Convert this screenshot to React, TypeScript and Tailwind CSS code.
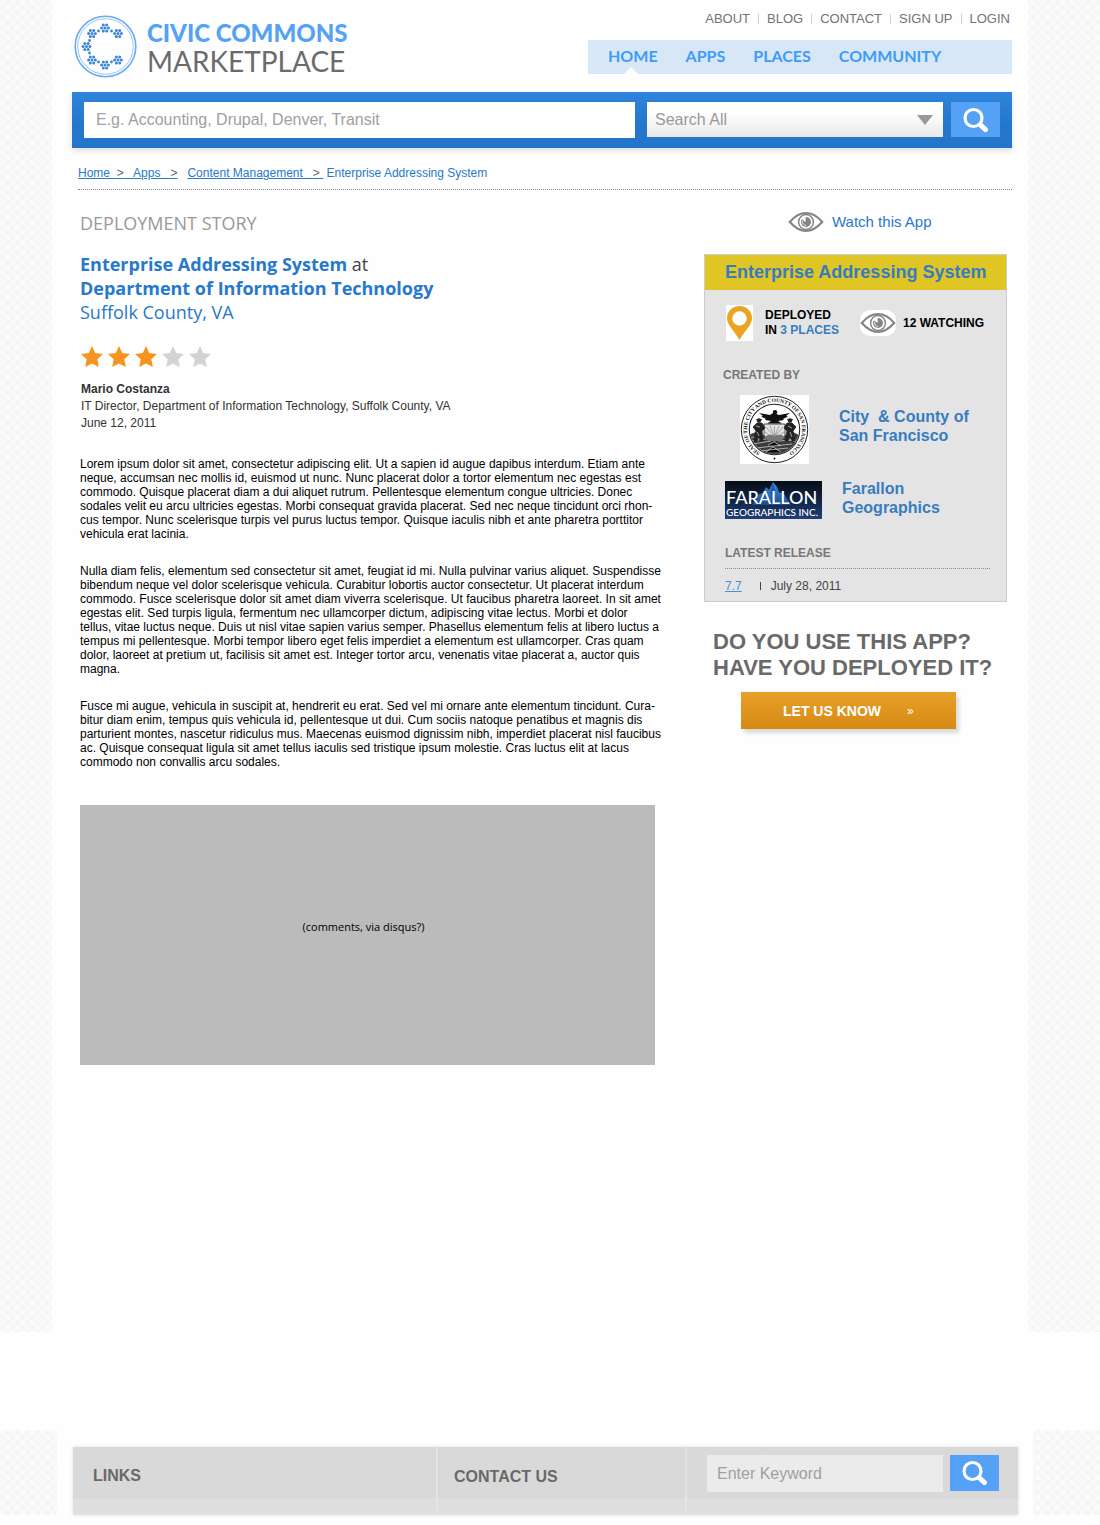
import React from "react";

const sans = "font-['Liberation_Sans',Arial,sans-serif]";
const humanist = "font-['Open_Sans',sans-serif]";
const checker =
  "bg-[repeating-conic-gradient(#f6f6f6_0%_25%,#fbfbfb_0%_50%)] bg-[length:10px_10px]";

const clusters: [number, number][] = [
  [31, 13], [18, 18.5], [44, 18.5], [12.5, 31.5], [18, 45], [44, 45], [31, 50],
];
const links: [number, number][] = [
  [24.5, 16], [37.5, 16], [15.5, 25.5], [15.5, 38], [24.5, 47], [37.5, 47],
];
const petals = [0, 60, 120, 180, 240, 300];

function LogoMark() {
  return (
    <svg viewBox="0 0 63 63" className="size-[63px] shrink-0" aria-hidden="true">
      <circle cx="31.5" cy="31.5" r="30.3" fill="none" stroke="#6aacf3" strokeWidth="1.6" />
      <circle cx="31.5" cy="31.5" r="27.8" fill="none" stroke="#8abef6" strokeWidth="0.9" />
      <g fill="#3b86d6">
        {clusters.map(([x, y], i) => (
          <g key={i}>
            <circle cx={x} cy={y} r="1.5" />
            {petals.map((a) => (
              <circle
                key={a}
                cx={x + 3.4 * Math.cos((a * Math.PI) / 180)}
                cy={y + 3.4 * Math.sin((a * Math.PI) / 180)}
                r="1.5"
              />
            ))}
          </g>
        ))}
        {links.map(([x, y], i) => (
          <circle key={i} cx={x} cy={y} r="1.4" />
        ))}
      </g>
    </svg>
  );
}

function SearchIcon() {
  return (
    <svg viewBox="0 0 26 26" className="size-[26px]" aria-hidden="true" fill="none" stroke="#fff">
      <circle cx="10.5" cy="11" r="8.5" strokeWidth="3.2" />
      <path d="M17.5 18 L22.5 22.6" strokeWidth="5" strokeLinecap="round" />
    </svg>
  );
}

function Eye() {
  return (
    <svg viewBox="0 0 36 22" className="h-[22px] w-9" aria-hidden="true">
      <path d="M1.8 11 C8 3.5 13 2 18 2 C23 2 28 3.5 34.2 11 C28 17.8 23 20 18 20 C13 20 8 17.8 1.8 11Z" fill="#fff" stroke="#858585" strokeWidth="2.2" />
      <circle cx="18" cy="11" r="7.4" fill="none" stroke="#858585" strokeWidth="1.5" />
      <circle cx="18" cy="11" r="5" fill="#858585" />
      <path d="M17.6 11 L12.6 7.6 A6 6 0 0 1 17.6 5Z" fill="#fff" />
      <path d="M14.6 10 A4 4 0 0 0 18 14.4" fill="none" stroke="#fff" strokeWidth="0.8" />
    </svg>
  );
}

function Pin() {
  return (
    <svg viewBox="0 0 27 36" className="h-9 w-[27px] bg-white" aria-hidden="true">
      <path fillRule="evenodd" fill="#eba421" d="M13.5 1 C6.5 1 1 6.4 1 13.2 C1 20 8.5 26 13.5 35 C18.5 26 26 20 26 13.2 C26 6.4 20.5 1 13.5 1Z M13.5 6.3 A7.2 7.2 0 1 1 13.5 20.7 A7.2 7.2 0 1 1 13.5 6.3Z" />
    </svg>
  );
}

function Star({ on }: { on: boolean }) {
  return (
    <svg viewBox="0 0 22 21" className="h-[21px] w-[22px]" aria-hidden="true">
      <path
        d="M11 0 L14.2 7 L22 8 L16.3 13.2 L17.8 21 L11 17.4 L4.2 21 L5.7 13.2 L0 8 L7.8 7Z"
        fill={on ? "#f7931e" : "#d1d3d4"}
      />
    </svg>
  );
}

function CitySeal() {
  return (
    <svg viewBox="0 0 69 69" className="size-[69px] bg-white" role="img" aria-label="Seal of the City and County of San Francisco">
      <defs>
        <path id="seal-ring" d="M34.5 62 A27.5 27.5 0 1 1 34.6 62" />
        <clipPath id="seal-disc"><circle cx="34.5" cy="34.5" r="24.5" /></clipPath>
      </defs>
      <circle cx="34.5" cy="34.5" r="33.2" fill="none" stroke="#222" strokeWidth="1" />
      <circle cx="34.5" cy="34.5" r="25.2" fill="none" stroke="#222" strokeWidth="1.1" />
      <text className="font-['Liberation_Serif',serif] font-bold" fill="#111" fontSize="5.4">
        <textPath href="#seal-ring" startOffset="50%" textAnchor="middle">SEAL OF THE CITY AND COUNTY OF SAN FRANCISCO</textPath>
      </text>
      <circle cx="34.5" cy="63.5" r="0.9" fill="#111" />
      <g clipPath="url(#seal-disc)">
        <path d="M8 40 L16 37 L28 42 L42 42 L53 37 L61 41 V62 H8Z" fill="#3a3a3a" />
        <path d="M11 46 L26 44 M13 49 L31 46 M38 46 L57 45 M16 53 L52 49 M20 56 L48 53 M12 42 L22 45 M47 43 L58 48 M28 50 L34 47 L41 51 M26 57 L33 52 L41 57" stroke="#cfcfcf" strokeWidth="0.8" />
        <path d="M24 29 H45 V41 L40 45 L34.5 47 L29 45 L24 41Z" fill="#e2e2e2" stroke="#222" strokeWidth="0.8" />
        <path d="M34.5 42 L26 32 M34.5 42 L30 31 M34.5 42 V31 M34.5 42 L39 31 M34.5 42 L43 32 M25 37 L31 41 M44 37 L38 41" stroke="#888" strokeWidth="0.7" />
        <path d="M24 42 Q30 38 34.5 41 Q40 38 45 42 L41 46 H28Z" fill="#777" />
        <path d="M19 18 L30 20 L33 18 L33 15.5 L36 15 L37.5 17 L36.5 19 L39 20 L50 18 L46 21 L48 21.5 L43 24 L44 25 L38 26 L42 28.5 H27 L31 26 L25 25 L26 24 L21 21.5 L23 21Z" fill="#111" />
        <circle cx="19" cy="25.5" r="2.2" fill="#222" />
        <path d="M16 24.5 H22 M17 28 L22 28 L25 33 L22 36 L23 46 H20 L19 38 L17 46 H14 L16 36 L13 32Z" fill="#222" stroke="#222" strokeWidth="0.8" />
        <circle cx="50" cy="25.5" r="2.2" fill="#222" />
        <path d="M47 24.5 H53 M47 28 L52 28 L56 32 L53 36 L55 46 H52 L50 38 L48 46 H45 L47 36 L44 33Z" fill="#222" stroke="#222" strokeWidth="0.8" />
        <path d="M16 31 L20 32 M17 37 L19 41 M48 31 L52 33 M50 37 L52 42" stroke="#ddd" strokeWidth="0.7" />
      </g>
    </svg>
  );
}

function FarallonLogo() {
  return (
    <svg viewBox="0 0 97 38" className="h-[38px] w-[97px]" role="img" aria-label="Farallon Geographics Inc.">
      <defs>
        <linearGradient id="night" x1="0" y1="0" x2="0" y2="1">
          <stop offset="0" stopColor="#060d18" />
          <stop offset="0.5" stopColor="#102443" />
          <stop offset="1" stopColor="#203f78" />
        </linearGradient>
        <linearGradient id="peak" x1="0" y1="0" x2="0" y2="1">
          <stop offset="0" stopColor="#3a94dc" />
          <stop offset="1" stopColor="#1c4b8c" />
        </linearGradient>
      </defs>
      <rect width="97" height="38" fill="url(#night)" />
      <path d="M27 24 L34 13 L38 12 L41 6 L44 9 L48 1 L52 6 L54 11 L59 13 L66 24Z" fill="url(#peak)" />
      <path d="M48 1 L45 12 L49 18 L50 10Z M38 12 L36 21 L41 16Z" fill="#1d5da8" />
      <g className="font-[Lato,sans-serif]" fill="#fff">
        <text x="1" y="23" fontSize="18" fontWeight="500">FARALLON</text>
        <text x="1" y="35" fontSize="10" fontWeight="500">GEOGRAPHICS INC.</text>
      </g>
    </svg>
  );
}

function Header() {
  const top = ["ABOUT", "BLOG", "CONTACT", "SIGN UP", "LOGIN"];
  return (
    <header className="flex justify-between">
      <a href="#home" className="mt-[15px] ml-0.5 flex gap-2.5 font-[Lato,sans-serif]">
        <LogoMark />
        <span className="flex flex-col pt-1">
          <span className="text-2xl leading-7 font-black text-[#55a2f5]">CIVIC COMMONS</span>
          <span className="text-[28px] leading-7 text-[#6b6b6b]">MARKETPLACE</span>
        </span>
      </a>
      <div className="w-[424px]">
        <nav aria-label="Account" className="mt-[11px] flex h-4 items-center justify-end pr-0.5 text-[13px] text-[#737373]">
          {top.map((t, i) => (
            <React.Fragment key={t}>
              {i > 0 && <span className="mx-2 h-2.5 w-px bg-[#cfcfcf]" />}
              <a href="#account">{t}</a>
            </React.Fragment>
          ))}
        </nav>
        <nav aria-label="Main" className="mt-[13px] flex h-[34px] items-center gap-7 bg-[#d8e7f5] pb-0.5 pl-5 font-[Lato,sans-serif] text-base font-bold text-[#3d9bfb]">
          <a href="#home" aria-current="page" className="relative flex h-full items-center">
            HOME
            <span className="absolute -bottom-0.5 left-4 border-x-[7px] border-b-[7px] border-x-transparent border-b-white" />
          </a>
          <a href="#apps">APPS</a>
          <a href="#places">PLACES</a>
          <a href="#community">COMMUNITY</a>
        </nav>
      </div>
    </header>
  );
}

function SearchBar() {
  return (
    <form className="mt-3.5 flex h-14 items-start bg-linear-to-b from-[#2f85dc] to-[#2376cb] to-60% px-3 pt-2.5 shadow-[0_3px_6px_rgba(0,0,0,0.12)]">
      <input
        aria-label="Search"
        placeholder="E.g. Accounting, Drupal, Denver, Transit"
        className="h-9 min-w-0 flex-1 bg-white px-3 text-base placeholder:text-[#a0a0a0]"
      />
      <div className="relative ml-3 w-[296px]">
        <select aria-label="Search in" className="h-[35px] w-full appearance-none bg-linear-to-b from-white from-30% to-[#e9e9e9] px-2 text-base text-[#999]">
          <option>Search All</option>
        </select>
        <span className="pointer-events-none absolute top-[13px] right-2.5 border-x-8 border-t-[10px] border-x-transparent border-t-[#999]" />
      </div>
      <button type="button" aria-label="Search" className="ml-2 flex h-[35px] w-[49px] items-center justify-center bg-[#54a1f6]">
        <SearchIcon />
      </button>
    </form>
  );
}

function Breadcrumb() {
  return (
    <nav aria-label="Breadcrumb" className="mt-[17px] ml-1.5 border-b border-dotted border-[#888] pb-[7px] text-xs leading-[17px] whitespace-pre text-[#2779cb]">
      <a href="#home" className="underline">Home  <span className="text-[#666]">&gt;</span>   </a>
      <a href="#apps" className="underline">Apps   <span className="text-[#666]">&gt;</span></a>
      {"   "}
      <a href="#content" className="underline">Content Management   <span className="text-[#666]">&gt;</span> </a>
      <span> Enterprise Addressing System</span>
    </nav>
  );
}

function Story() {
  return (
    <article className="min-w-0 flex-1">
      <h2 className={`${humanist} text-lg leading-6 text-[#999]`}>DEPLOYMENT STORY</h2>
      <h1 className={`${humanist} mt-[17px] text-lg leading-6 text-[#2779cb]`}>
        <a href="#app" className="font-bold">Enterprise Addressing System</a>
        <span className="text-[#444]"> at</span>
        <br />
        <a href="#dept" className="font-bold">Department of Information Technology</a>
        <br />
        Suffolk County, VA
      </h1>
      <div role="img" aria-label="3 out of 5 stars" className="mt-[22px] ml-px flex gap-[5px]">
        {[1, 2, 3, 4, 5].map((n) => (
          <Star key={n} on={n <= 3} />
        ))}
      </div>
      <div className="mt-3.5 ml-px text-xs leading-[17px] text-[#333]">
        <p className="font-bold">Mario Costanza</p>
        <p>IT Director, Department of Information Technology, Suffolk County, VA</p>
        <p>June 12, 2011</p>
      </div>
      <div className="mt-[25px] space-y-[23px] text-xs leading-[14px] text-black">
        <p>
          Lorem ipsum dolor sit amet, consectetur adipiscing elit. Ut a sapien id augue dapibus interdum. Etiam ante
          neque, accumsan nec mollis id, euismod ut nunc. Nunc placerat dolor a tortor elementum nec egestas est
          commodo. Quisque placerat diam a dui aliquet rutrum. Pellentesque elementum congue ultricies. Donec
          sodales velit eu arcu ultricies egestas. Morbi consequat gravida placerat. Sed nec neque tincidunt orci
          rhon&shy;cus tempor. Nunc scelerisque turpis vel purus luctus tempor. Quisque iaculis nibh et ante pharetra
          porttitor vehicula erat lacinia.
        </p>
        <p>
          Nulla diam felis, elementum sed consectetur sit amet, feugiat id mi. Nulla pulvinar varius aliquet. Suspendisse
          bibendum neque vel dolor scelerisque vehicula. Curabitur lobortis auctor consectetur. Ut placerat interdum
          commodo. Fusce scelerisque dolor sit amet diam viverra scelerisque. Ut faucibus pharetra laoreet. In sit amet
          egestas elit. Sed turpis ligula, fermentum nec ullamcorper dictum, adipiscing vitae lectus. Morbi et dolor
          <br />
          tellus, vitae luctus neque. Duis ut nisl vitae sapien varius semper. Phasellus elementum felis at libero luctus a
          tempus mi pellentesque. Morbi tempor libero eget felis imperdiet a elementum est ullamcorper. Cras quam
          dolor, laoreet at pretium ut, facilisis sit amet est. Integer tortor arcu, venenatis vitae placerat a, auctor quis
          magna.
        </p>
        <p>
          Fusce mi augue, vehicula in suscipit at, hendrerit eu erat. Sed vel mi ornare ante elementum tincidunt.
          Cura&shy;bitur diam enim, tempus quis vehicula id, pellentesque ut dui. Cum sociis natoque penatibus et magnis dis
          parturient montes, nascetur ridiculus mus. Maecenas euismod dignissim nibh, imperdiet placerat nisl faucibus
          ac. Quisque consequat ligula sit amet tellus iaculis sed tristique ipsum molestie. Cras luctus elit at lacus
          commodo non convallis arcu sodales.
        </p>
      </div>
      <section className={`${humanist} mt-9 mr-1.5 flex h-[260px] items-center justify-center bg-[#bbb] pr-2 pb-4 text-[11px] text-black`}>
        (comments, via disqus?)
      </section>
    </article>
  );
}

function Sidebar() {
  return (
    <aside className="w-[303px] shrink-0">
      <a href="#watch" className="ml-[84px] flex items-center gap-2 text-[15px] leading-5 text-[#2779cb]">
        <Eye />
        Watch this App
      </a>
      <section className="mt-[21px] border border-[#ccc] bg-[#e4e4e4] pb-[7px]">
        <h3 className="bg-[#e0c624] pl-5 text-lg leading-[35px] font-bold text-[#377cc0]">Enterprise Addressing System</h3>
        <div className="mt-[15px] ml-[21px] flex items-center text-xs leading-[15px] font-bold text-black">
          <Pin />
          <p className="ml-3 w-[95px]">
            DEPLOYED
            <br />
            IN <a href="#places" className="text-[#377cc0]">3 PLACES</a>
          </p>
          <span className="rounded-[10px] bg-white py-0.5"><Eye /></span>
          <p className="ml-[7px]">12 WATCHING</p>
        </div>
        <h4 className="mt-[26px] ml-[18px] text-xs leading-4 font-bold text-[#777]">CREATED BY</h4>
        <div className="mt-3 ml-[35px] flex items-center gap-[30px] text-base leading-[19px] font-bold text-[#377cc0]">
          <CitySeal />
          <a href="#sf" className="mb-2 whitespace-pre">{"City  & County of\nSan Francisco"}</a>
        </div>
        <div className="mt-[15px] ml-5 flex items-center gap-5 text-base leading-[19px] font-bold text-[#377cc0]">
          <FarallonLogo />
          <a href="#farallon" className="mb-1">Farallon<br />Geographics</a>
        </div>
        <div className="mt-6 mr-4 ml-5 text-xs leading-4">
          <h4 className="border-b border-dotted border-[#888] pb-[7px] font-bold text-[#777]">LATEST RELEASE</h4>
          <p className="mt-[9px] flex items-center text-[#444]">
            <a href="#release" className="text-[#4a90d9] underline">7.7</a>
            <span className="mr-2.5 ml-[18px] h-2 w-px bg-[#444]" />
            July 28, 2011
          </p>
        </div>
      </section>
      <h3 className="mt-[27px] ml-[9px] text-[22px] leading-[26px] font-bold whitespace-nowrap text-[#696969]">
        DO YOU USE THIS APP?
        <br />
        HAVE YOU DEPLOYED IT?
      </h3>
      <button type="button" className="mt-[11px] ml-[37px] flex h-[37px] w-[215px] items-center bg-linear-to-b from-[#e8a028] to-[#d58a14] pl-[42px] text-sm font-bold text-white shadow-[3px_4px_4px_rgba(0,0,0,0.15)]">
        LET US KNOW
        <span className="ml-[26px] text-xs font-normal">»</span>
      </button>
    </aside>
  );
}

function Footer() {
  return (
    <footer className={`${checker} pr-[67px] pl-[57px]`}>
      <div className="bg-[#fefefe] pt-[17px] pr-[15px] pl-4">
        <div className="grid grid-cols-[365fr_249fr_331fr] divide-x-2 divide-[#e4e4e4] bg-linear-to-b from-[#d9d9d9] from-[52px] to-[#dfdfdf] to-[52px] text-base font-bold text-[#696969] shadow-[0_0_4px_rgba(0,0,0,0.12)]">
          <h4 className="h-[68px] pt-[17px] pl-5">LINKS</h4>
          <h4 className="pt-[18px] pl-4">CONTACT US</h4>
          <form className="flex items-start gap-[7px] pt-2 pl-5">
            <input aria-label="Keyword" placeholder="Enter Keyword" className="h-[37px] min-w-0 flex-1 bg-[#ebebeb] px-2.5 font-normal placeholder:text-[#a0a0a0]" />
            <button type="button" aria-label="Search keyword" className="mr-[19px] flex h-9 w-[49px] items-center justify-center bg-[#54a1f6]">
              <SearchIcon />
            </button>
          </form>
        </div>
      </div>
    </footer>
  );
}

export default function App() {
  return (
    <div className={`${sans} bg-[#fefefe] pb-2.5`}>
      <div className={`${checker} pr-[72px] pl-[52px]`}>
        <div className="min-h-[1332px] bg-[#fefefe] pr-4 pl-5">
          <Header />
          <SearchBar />
          <Breadcrumb />
          <main className="mt-[21px] flex gap-[43px] pr-[5px] pl-2">
            <Story />
            <Sidebar />
          </main>
        </div>
      </div>
      <div className="mt-[98px]">
        <Footer />
      </div>
    </div>
  );
}
